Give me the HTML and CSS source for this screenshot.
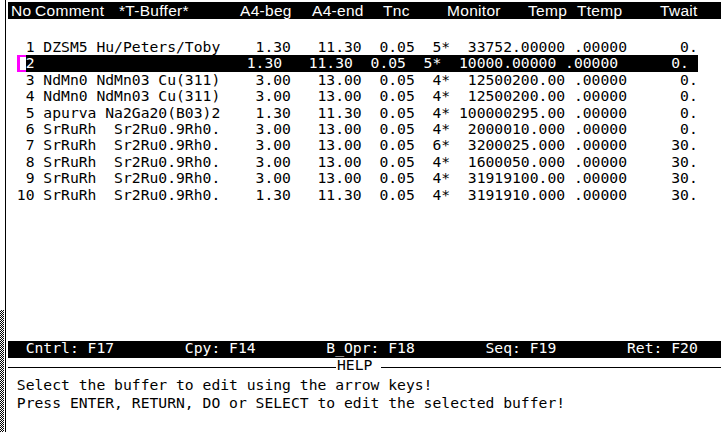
FILE: index.html
```html
<!DOCTYPE html>
<html lang="en">
<head>
<meta charset="utf-8">
<title>T-Buffer</title>
<link rel="stylesheet" href="styles.css">
</head>
<body>
<div class="screen">
  <aside class="gutter"><div class="dither"></div></aside>
  <main class="term">
    <div class="hdr">
      <span>No</span><span>Comment</span><span>*T-Buffer*</span><span>A4-beg</span><span>A4-end</span><span>Tnc</span><span>Monitor</span><span>Temp</span><span>Ttemp</span><span>Twait</span>
    </div>
    <div class="rows">
      <div class="row">  1 DZSM5 Hu/Peters/Toby    1.30   11.30  0.05  5*  33752.00000 .00000      0.</div>
      <div class="row"> <span class="sel"><span class="cur"></span>2                        1.30   11.30  0.05  5*  10000.00000 .00000      0. </span></div>
      <div class="row">  3 NdMn0 NdMn03 Cu(311)    3.00   13.00  0.05  4*  12500200.00 .00000      0.</div>
      <div class="row">  4 NdMn0 NdMn03 Cu(311)    3.00   13.00  0.05  4*  12500200.00 .00000      0.</div>
      <div class="row">  5 apurva Na2Ga20(B03)2    1.30   11.30  0.05  4* 100000295.00 .00000      0.</div>
      <div class="row">  6 SrRuRh  Sr2Ru0.9Rh0.    3.00   13.00  0.05  4*  2000010.000 .00000      0.</div>
      <div class="row">  7 SrRuRh  Sr2Ru0.9Rh0.    3.00   13.00  0.05  6*  3200025.000 .00000     30.</div>
      <div class="row">  8 SrRuRh  Sr2Ru0.9Rh0.    3.00   13.00  0.05  4*  1600050.000 .00000     30.</div>
      <div class="row">  9 SrRuRh  Sr2Ru0.9Rh0.    3.00   13.00  0.05  4*  31919100.00 .00000     30.</div>
      <div class="row"> 10 SrRuRh  Sr2Ru0.9Rh0.    1.30   11.30  0.05  4*  3191910.000 .00000     30.</div>
    </div>
    <div class="status">  Cntrl: F17        Cpy: F14        B_Opr: F18        Seq: F19        Ret: F20</div>
    <div class="helpbar"><span class="rule rule-l"></span><span class="helpbar-title">HELP</span><span class="rule rule-r"></span></div>
    <div class="help"> Select the buffer to edit using the arrow keys!
 Press ENTER, RETURN, DO or SELECT to edit the selected buffer!</div>
  </main>
</div>
</body>
</html>
```
FILE: styles.css
```css
html, body {
  margin: 0;
  padding: 0;
  background: #fff;
}

.screen {
  display: flex;
  width: 721px;
  height: 432px;
  overflow: hidden;
  background: #fff;
}

.gutter {
  width: 5px;
  border-right: 1px solid #000;
  margin-right: 2px;
  display: flex;
  flex-direction: column;
  justify-content: flex-end;
  flex: none;
}

.dither {
  width: 4px;
  height: 122px;
  background: repeating-conic-gradient(#000 0 25%, #fff 0 50%) 0 0 / 2px 2px;
}

.term {
  flex: 1;
  display: flex;
  flex-direction: column;
  font-family: "DejaVu Sans Mono", monospace;
  font-size: 14.7px;
  color: #000;
  min-width: 0;
}

.hdr {
  margin-top: 2px;
  height: 17px;
  background: #000;
  color: #fff;
  display: grid;
  grid-template-columns: 24px 84px 121px 72px 71px 64px 81px 49px 83px auto;
  padding-left: 3px;
  font-family: "Liberation Sans", sans-serif;
  font-size: 15.5px;
  letter-spacing: 0.3px;
  line-height: 17px;
  white-space: nowrap;
  overflow: hidden;
}

.rows {
  height: 322px;
  padding-top: 20px;
  box-sizing: border-box;
}

.row {
  white-space: pre;
  line-height: 16.4px;
  height: 16.4px;
}

.sel {
  display: inline-block;
  background: #000;
  color: #fff;
}

.cur {
  display: inline-block;
  vertical-align: top;
  width: 1ch;
  height: 17px;
  box-sizing: border-box;
  border: 2px solid #f0f;
  border-left-width: 3px;
  border-right: 0;
  background: #fff;
}

.status {
  height: 17px;
  background: #000;
  color: #fff;
  white-space: pre;
  line-height: 13.5px;
}

.helpbar {
  height: 18px;
  display: flex;
}

.rule {
  height: 1px;
  background: #000;
  margin-top: 9px;
}

.rule-l {
  width: 328px;
}

.rule-r {
  flex: 1;
}

.helpbar-title {
  line-height: 14px;
  margin: 0 9px 0 1px;
}

.help {
  white-space: pre;
  line-height: 18px;
}
```
